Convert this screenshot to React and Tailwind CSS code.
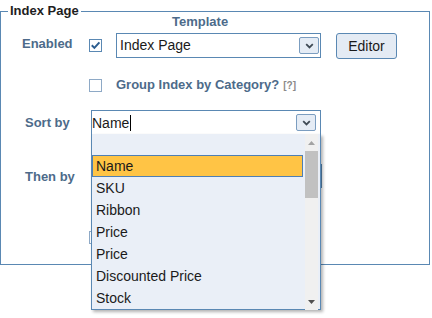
import React from "react";

function Check({ checked }) {
  return (
    <svg width="13" height="13" viewBox="0 0 13 13" className="block shrink-0">
      <rect x="0.5" y="0.5" width="12" height="12" fill="#ffffff" stroke={checked ? "#5a88b3" : "#8ea9c6"} />
      {checked && (
        <path d="M2.8 6.2 L5.4 8.9 L10.4 3.4" fill="none" stroke="#2c5d8f" strokeWidth="2" />
      )}
    </svg>
  );
}

function ArrowBtn() {
  return (
    <div className="flex h-[17px] w-[20px] items-center justify-center rounded-[2px] border border-[#7b9dc0] bg-[#e5ecf5]">
      <svg width="9" height="6" viewBox="0 0 9 6">
        <path d="M1.2 1.2 L4.5 4.4 L7.8 1.2" fill="none" stroke="#3f4a55" strokeWidth="1.8" />
      </svg>
    </div>
  );
}

const items = ["Name", "SKU", "Ribbon", "Price", "Price", "Discounted Price", "Stock"];

export default function App() {
  return (
    <div className="relative h-[318px] w-[432px] overflow-hidden bg-white font-['Liberation_Sans',Arial,sans-serif]">
      <div className="relative mt-[11px] h-[254px] w-[430px] border border-[#5a88b3]">
        <div className="absolute left-[7px] top-[-9px] bg-white px-[2px] text-[13px] font-bold leading-[16px] text-[#1e1e1e]">
          Index Page
        </div>
        <div className="flex flex-col">
          {/* Template header */}
          <div className="h-[21px] pl-[171px] pt-[2px] text-[13px] font-bold leading-[16px] text-[#4d6b8a]">
            Template
          </div>
          {/* Enabled row */}
          <div className="flex h-[26px] items-start">
            <div className="mt-[3px] w-[88px] pl-[21px] text-[13px] font-bold leading-[16px] text-[#4d6b8a]">Enabled</div>
            <div className="mt-[6px]">
              <Check checked />
            </div>
            <div className="ml-[14px] flex h-[25px] w-[205px] items-center justify-between border border-[#5a88b3] bg-white pl-[3px] pr-[1px]">
              <span className="text-[14px] leading-[23px] text-[#1a1a1a]">Index Page</span>
              <ArrowBtn />
            </div>
            <div className="ml-[15px] flex h-[26px] w-[61px] items-center justify-center rounded-[3px] border border-[#5a88b3] bg-[#e4ebf4] text-[14px] text-[#1a1a1a]">
              Editor
            </div>
          </div>
          {/* Group row */}
          <div className="mt-[18px] flex h-[16px] items-start">
            <div className="w-[88px]" />
            <div className="mt-[2px]">
              <Check />
            </div>
            <div className="ml-[14px] flex items-baseline">
              <span className="text-[13px] font-bold leading-[16px] text-[#4d6b8a]">Group Index by Category?</span>
              <span className="ml-[4px] text-[10px] font-bold text-[#8a8a8a]">[?]</span>
            </div>
          </div>
          {/* Sort by row */}
          <div className="mt-[17px] flex h-[24px] items-start">
            <div className="mt-[5px] w-[90px] pl-[24px] text-[13px] font-bold leading-[16px] text-[#4d6b8a]">Sort by</div>
            <div className="flex h-[24px] w-[230px] items-center justify-between border border-b-0 border-[#5a88b3] bg-white pr-[4px]">
              <span className="flex items-center text-[14px] leading-[22px] text-[#1a1a1a]">
                Name
                <span className="ml-[1px] inline-block h-[16px] w-[1px] bg-black" />
              </span>
              <ArrowBtn />
            </div>
          </div>
          {/* Then by row */}
          <div className="mt-[30px] flex h-[24px] items-start">
            <div className="mt-[5px] w-[90px] pl-[24px] text-[13px] font-bold leading-[16px] text-[#4d6b8a]">Then by</div>
            <div className="flex h-[24px] w-[231px] items-center justify-end border border-[#5a88b3] bg-white pr-[4px]">
              <ArrowBtn />
            </div>
          </div>
          {/* hidden checkbox row */}
          <div className="mt-[43px] flex">
            <div className="w-[88px]" />
            <Check />
          </div>
        </div>
      </div>

      {/* Open dropdown list */}
      <div className="absolute left-[91px] top-[134px] flex h-[176px] w-[230px] border border-t-0 border-[#5a88b3] bg-[#eaeff7] shadow-[2px_2px_3px_rgba(0,0,0,0.3)]">
        <div className="flex w-[211px] flex-col">
          <div className="h-[22px]" />
          {items.map((it, i) => (
            <div
              key={i}
              className={
                i === 0
                  ? "box-border h-[22px] border border-[#4f7fb3] bg-[#ffc445] px-[3px] text-[14px] leading-[20px] text-[#1a1a1a]"
                  : "h-[22px] px-[4px] text-[14px] leading-[22px] text-[#1a1a1a]"
              }
            >
              {it}
            </div>
          ))}
        </div>
        <div className="ml-[2px] flex h-[176px] w-[13px] flex-col bg-[#f0f0f0]">
          <div className="flex h-[17px] items-center justify-center">
            <svg width="7" height="4" viewBox="0 0 7 4">
              <path d="M0 4 L3.5 0 L7 4 Z" fill="#a3a3a3" />
            </svg>
          </div>
          <div className="h-[47px] w-[13px] bg-[#c1c1c1]" />
          <div className="flex-1" />
          <div className="flex h-[17px] items-center justify-center">
            <svg width="7" height="4" viewBox="0 0 7 4">
              <path d="M0 0 L7 0 L3.5 4 Z" fill="#505050" />
            </svg>
          </div>
        </div>
      </div>
    </div>
  );
}
